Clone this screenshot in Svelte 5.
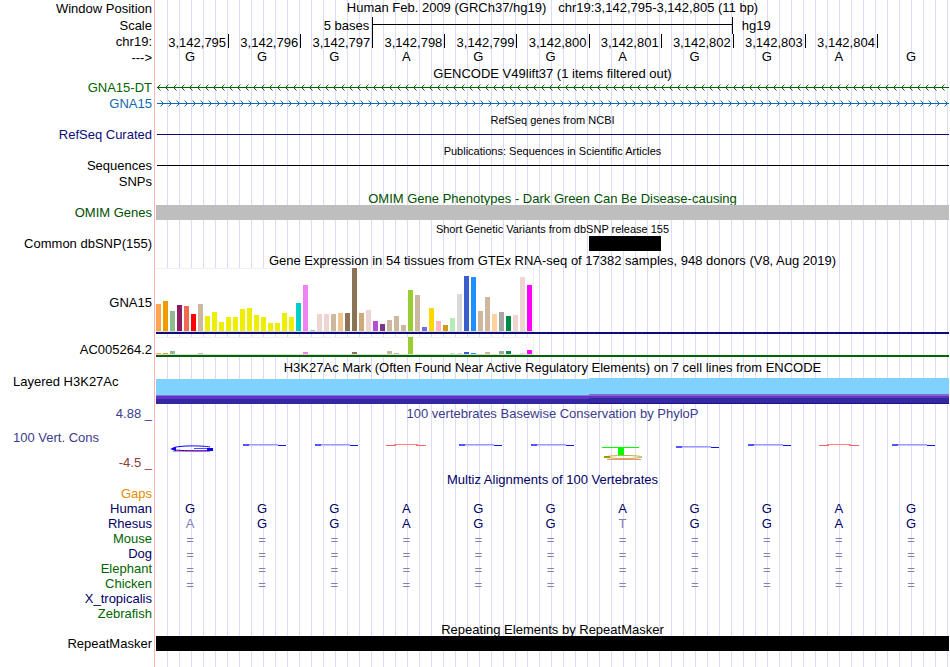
<script>
    const ticks = [795, 796, 797, 798, 799, 800, 801, 802, 803, 804].map((n) => `3,142,${n}`);
    const sequence = [...'GGGAGGAGGAG'];

    // one entry per GTEx tissue: colour, GNA15 height, AC005264.2 height
    const tissues = [
        ['#ffa54f', 27, 1], ['#ee9a00', 30, 1], ['#8fbc8f', 20, 3], ['#8b1c62', 26, 0],
        ['#ee6a50', 25, 0], ['#ff0000', 17, 0], ['#cdb79e', 27, 1], ['#eeee00', 15, 0],
        ['#eeee00', 19, 0], ['#eeee00', 9, 0], ['#eeee00', 14, 0], ['#eeee00', 14, 0],
        ['#eeee00', 22, 0], ['#eeee00', 23, 0], ['#eeee00', 16, 0], ['#eeee00', 14, 0],
        ['#eeee00', 8, 0], ['#eeee00', 8, 0], ['#eeee00', 18, 0], ['#eeee00', 14, 0],
        ['#00cdcd', 28, 0], ['#ee82ee', 46, 2], ['#9ac0cd', 1, 0], ['#eed5d2', 17, 0],
        ['#eed5d2', 17, 0], ['#cdb79e', 17, 0], ['#eec591', 18, 0], ['#8b7355', 18, 0],
        ['#8b7355', 63, 2], ['#cdaa7d', 18, 0], ['#eed5d2', 21, 0], ['#b452cd', 10, 0],
        ['#7a378b', 7, 0], ['#cdb79e', 11, 3], ['#cdb79e', 15, 1], ['#cdb79e', 6, 0],
        ['#9acd32', 41, 17], ['#cdb79e', 36, 0], ['#7a67ee', 4, 0], ['#ffd700', 23, 0],
        ['#ffb6c1', 10, 0], ['#cd9b1d', 6, 0], ['#b4eeb4', 13, 1], ['#d9d9d9', 37, 1],
        ['#3a5fcd', 55, 2], ['#1e90ff', 54, 1], ['#cdb79e', 20, 0], ['#cdb79e', 34, 2],
        ['#ffd39b', 17, 0], ['#a6a6a6', 19, 3], ['#008b45', 15, 3], ['#eed5d2', 16, 0],
        ['#eed5d2', 54, 1], ['#ff00ff', 46, 4]
    ];

    const logos = ['first', 'blue', 'blue', 'red', 'blue', 'blue', 'mixed', 'low', 'blue', 'red', 'blue'];

    const species = [
        { name: 'Gaps', tone: 'orange', bases: '' },
        { name: 'Human', tone: 'navy', bases: 'GGGAGGAGGAG' },
        { name: 'Rhesus', tone: 'navy', bases: 'AGGAGGTGGAG', diff: [0, 6] },
        { name: 'Mouse', tone: 'green', bases: '===========' },
        { name: 'Dog', tone: 'navy', bases: '===========' },
        { name: 'Elephant', tone: 'green', bases: '===========' },
        { name: 'Chicken', tone: 'green', bases: '===========' },
        { name: 'X_tropicalis', tone: 'navy', bases: '' },
        { name: 'Zebrafish', tone: 'green', bases: '' }
    ];
</script>

{#snippet title(text, kind = '')}
    <div class="row title">
        <div class="label"></div>
        <div class="caption {kind}">{text}</div>
    </div>
{/snippet}

{#snippet intron(name, tone, d)}
    <div class="row">
        <div class="label {tone}">{name}</div>
        <svg class="intron {tone}" width="100%" height="15">
            <defs>
                <pattern id="barb-{name}" width="8" height="15" patternUnits="userSpaceOnUse">
                    <path {d} fill="none" stroke="currentColor" />
                </pattern>
            </defs>
            <rect width="100%" height="15" fill="url(#barb-{name})" />
            <rect x="1" y="7" width="100%" height="1" fill="currentColor" />
        </svg>
    </div>
{/snippet}

{#snippet expression(name, column, kind)}
    <div class="row expression {kind}">
        <div class="label">{name}</div>
        <div class="gene">
            <div class="chart">
                {#each tissues as tissue}
                    <span class="bar" style="height: {tissue[column]}px; background: {tissue[0]}"></span>
                {/each}
            </div>
        </div>
    </div>
{/snippet}

<main class="browser">
    <div class="row head tall">
        <div class="label">Window Position</div>
        <div class="position">
            <span>Human Feb. 2009 (GRCh37/hg19)</span>
            <span>chr19:3,142,795-3,142,805 (11 bp)</span>
        </div>
    </div>
    <div class="row head scale">
        <div class="label">Scale</div>
        <div class="bases">
            <div class="scale-text">5 bases</div>
            <div class="scale-bar"></div>
            <div class="assembly">hg19</div>
        </div>
    </div>
    <div class="row head tall">
        <div class="label">chr19:</div>
        <div class="bases">
            {#each ticks as tick}
                <div class="tick">{tick}</div>
            {/each}
            <div class="tick"></div>
        </div>
    </div>
    <div class="row head">
        <div class="label">---&gt;</div>
        <div class="bases sequence">
            {#each sequence as base}
                <span class="base">{base}</span>
            {/each}
        </div>
    </div>

    <section class="gencode">
        {@render title('GENCODE V49lift37 (1 items filtered out)')}
        {@render intron('GNA15-DT', 'green', 'M4.5 4.5L1.5 7.5L4.5 10.5')}
        {@render intron('GNA15', 'blue', 'M4.5 4.5L7.5 7.5L4.5 10.5')}
    </section>

    <section>
        {@render title('RefSeq genes from NCBI', 'small')}
        <div class="row">
            <div class="label refseq">RefSeq Curated</div>
            <div class="rule refseq"></div>
        </div>
    </section>

    <section>
        {@render title('Publications: Sequences in Scientific Articles', 'small')}
        <div class="row">
            <div class="label">Sequences</div>
            <div class="rule"></div>
        </div>
        <div class="row">
            <div class="label">SNPs</div>
        </div>
    </section>

    <section>
        {@render title('OMIM Gene Phenotypes - Dark Green Can Be Disease-causing', 'omim')}
        <div class="row">
            <div class="label omim">OMIM Genes</div>
            <div class="block gray"></div>
        </div>
    </section>

    <section>
        {@render title('Short Genetic Variants from dbSNP release 155', 'small')}
        <div class="row">
            <div class="label">Common dbSNP(155)</div>
            <div class="bases">
                <div class="block variant"></div>
            </div>
        </div>
    </section>

    <section>
        {@render title('Gene Expression in 54 tissues from GTEx RNA-seq of 17382 samples, 948 donors (V8, Aug 2019)')}
        {@render expression('GNA15', 1, 'coding')}
        {@render expression('AC005264.2', 2, 'noncoding')}
    </section>

    <section class="histone">
        {@render title('H3K27Ac Mark (Often Found Near Active Regulatory Elements) on 7 cell lines from ENCODE')}
        <div class="row signal">
            <div class="label left">Layered H3K27Ac</div>
            <div class="bases">
                <div class="signal-low"></div>
                <div class="signal-high"></div>
            </div>
        </div>
    </section>

    <section>
        <div class="row title">
            <div class="label cons">4.88 _</div>
            <div class="caption cons">100 vertebrates Basewise Conservation by PhyloP</div>
        </div>
        <div class="row conservation">
            <div class="label cons-labels">
                <span class="cons">100 Vert. Cons</span>
                <span class="minimum">-4.5 _</span>
            </div>
            <div class="bases">
                {#each logos as logo}
                    <svg width="72" height="49" viewBox="0 0 72 49" fill="none">
                        {#if logo === 'first'}
                            <path d="M17 31.5H54" stroke="#ff8a80" />
                            <path d="M54 27C48 25.5 17 25 16 29C15 31 50 31 55 30.5" stroke="#0000ff" />
                            <path d="M38 28.5H52" stroke="#5050ff" />
                            <path d="M14 29L20 27V31ZM51 28H57V31H51Z" fill="#0000ff" />
                        {:else if logo === 'mixed'}
                            <path d="M13 27.5H50" stroke="#00ff00" />
                            <path d="M29 27H35V35H29Z" fill="#00ff00" />
                            <path d="M18 39.5H52" stroke="#ff8a80" />
                            <ellipse cx="35" cy="37" rx="18" ry="1.5" stroke="#b8b240" />
                            <path d="M15 36H21V38H15Z" fill="#999900" />
                        {:else if logo === 'red'}
                            <path d="M14 25.5H24M44 25.5H54" stroke="#ff6060" />
                            <path d="M22 24.5H46" stroke="#ff8080" />
                        {:else}
                            <g transform={logo === 'low' ? 'translate(0 2)' : undefined}>
                                <path d="M20 24.5H50" stroke="#9a9aff" />
                                <path d="M15 25H21" stroke="#5555ff" stroke-width="2" />
                                <path d="M21 25.5H52" stroke="#c4c4ff" />
                                <path d="M50 25.5H58" stroke="#1010ff" />
                            </g>
                        {/if}
                    </svg>
                {/each}
            </div>
        </div>
    </section>

    <section class="multiz">
        {@render title('Multiz Alignments of 100 Vertebrates', 'navy')}
        {#each species as row}
            <div class="row species">
                <div class="label {row.tone}">{row.name}</div>
                <div class="bases">
                    {#each row.bases as base, i}
                        <span class="base navy" class:dim={base === '=' || row.diff?.includes(i)} class:gap={base === '='}>{base}</span>
                    {/each}
                </div>
            </div>
        {/each}
    </section>

    <section class="repeats">
        {@render title('Repeating Elements by RepeatMasker')}
        <div class="row">
            <div class="label">RepeatMasker</div>
            <div class="block"></div>
        </div>
    </section>
</main>

<style>
    :global(body) {
        margin: 0;
        background: #fff;
    }

    .browser {
        box-sizing: border-box;
        min-height: 100vh;
        padding: 0 1px 16px 0;
        color: #000;
        font: 13px/15px "Liberation Sans", Arial, sans-serif;
        background:
            linear-gradient(#ffb4b4, #ffb4b4) 154px 0 / 1px 100% no-repeat,
            repeating-linear-gradient(90deg, transparent 0 11px, #dcdcf8 11px 12px) 156px 0 no-repeat;
    }

    section {
        display: flex;
        flex-direction: column;
        padding-top: 2px;
    }

    .gencode {
        padding-top: 0;
    }

    .row {
        display: grid;
        grid-template-columns: 154px 1fr;
        column-gap: 2px;
        min-height: 15px;
    }

    .row + .row:not(.title) {
        margin-top: 1px;
    }

    .title + .row,
    .multiz .row,
    .browser > .row {
        margin-top: 0 !important;
    }

    .title {
        height: 14px;
        min-height: 14px;
        line-height: 16px;
    }

    .species {
        height: 15px;
    }

    .head {
        height: 16px;
        line-height: 16px;
    }

    .scale {
        line-height: 17px;
    }

    .tall {
        height: 17px;
        line-height: 17px;
    }

    .label {
        padding-right: 2px;
        text-align: right;
        white-space: nowrap;
    }

    .left {
        padding-left: 13px;
        text-align: left;
    }

    .caption {
        text-align: center;
        white-space: nowrap;
    }

    .small {
        font-size: 11px;
        line-height: 14px;
    }

    .position {
        display: flex;
        justify-content: center;
        gap: 12px;
        line-height: 16px;
    }

    .bases {
        display: grid;
        grid-template-columns: repeat(11, 1fr);
    }

    .base {
        padding-right: 4px;
        text-align: center;
    }

    .gap {
        line-height: 17px;
    }

    .sequence {
        line-height: 13px;
    }

    .scale-text {
        grid-column: 1 / 4;
        padding-right: 3px;
        text-align: right;
    }

    .scale-bar {
        grid-column: 4 / 9;
        border: solid #000;
        border-width: 0 1px;
        background: linear-gradient(#000, #000) 0 7px / 100% 1px no-repeat;
    }

    .assembly {
        grid-column: 9 / 12;
        padding-left: 9px;
    }

    .tick {
        height: 14px;
        margin-top: 1px;
        padding-right: 2px;
        line-height: 17px;
        text-align: right;
    }

    .tick + .tick {
        border-left: 1px solid #000;
    }

    .intron {
        display: block;
    }

    .rule {
        height: 1px;
        margin: 7px 0 0 1px;
        background: #000;
    }

    .rule.refseq {
        background: #0c0c78;
    }

    .block {
        height: 15px;
        background: #000;
    }

    .gray {
        background: #bebebe;
    }

    .variant {
        grid-column: 7;
    }

    .gene {
        display: flex;
        align-items: flex-end;
        border-bottom: 2px solid #0c0c78;
    }

    .chart {
        box-sizing: border-box;
        display: flex;
        align-items: flex-end;
        gap: 2px;
        height: 64px;
        padding-right: 2px;
        border-bottom: 1px solid #dcdcdc;
        background: #fff;
        box-shadow: inset 0 1px #f0f0f0, inset -1px 0 #f0f0f0;
    }

    .bar {
        width: 5px;
    }

    .coding {
        height: 67px;
    }

    .coding .label {
        padding-top: 28px;
    }

    .noncoding {
        height: 22px;
    }

    .noncoding .label {
        align-self: end;
    }

    .noncoding .gene {
        border-color: #006400;
    }

    .noncoding .chart {
        height: 18px;
    }

    .histone {
        padding-top: 3px;
    }

    .signal {
        height: 30px;
    }

    .signal .bases {
        align-items: end;
    }

    .signal-low {
        grid-column: 1 / 7;
        height: 25px;
        background: linear-gradient(#7fd1ff 16px, #8078cc 16px 17px, #6432c8 17px 20px, #3228a0 20px);
    }

    .signal-high {
        grid-column: 7 / 12;
        height: 26px;
        background: linear-gradient(#7fd1ff 16px, #8468cc 16px 18px, #6432c8 18px 20px, #3228a0 20px 25px, #1e148c 25px);
    }

    .conservation {
        height: 50px;
    }

    .cons-labels {
        display: flex;
        flex-direction: column;
        justify-content: space-between;
        padding-top: 10px;
    }

    .cons-labels .cons {
        padding-left: 13px;
        text-align: left;
    }

    .cons {
        color: #3c3c8c;
    }

    .minimum {
        color: #8c3c3c;
    }

    .green {
        color: #006400;
    }

    .omim {
        color: #005000;
    }

    .blue {
        color: #1068b0;
    }

    .refseq {
        color: #0c0c78;
    }

    .navy {
        color: #000064;
    }

    .orange {
        color: #e68a00;
    }

    .dim {
        color: #8080b4;
    }

    .repeats {
        padding-top: 1px;
    }
</style>
